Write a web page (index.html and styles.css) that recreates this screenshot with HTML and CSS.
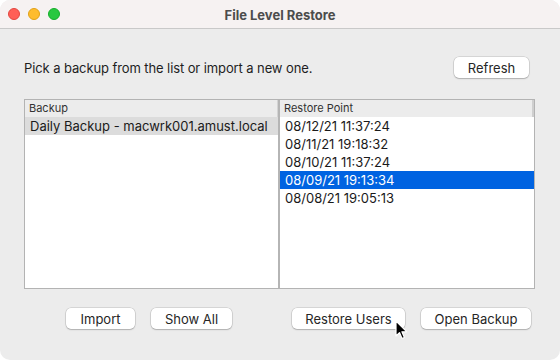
FILE: index.html
```html
<!DOCTYPE html>
<html lang="en">
<head>
<meta charset="UTF-8" />
<title>File Level Restore</title>
<link rel="stylesheet" href="styles.css">
</head>
<body>
<div class="window">
  <div class="titlebar">
    <div class="lights">
      <span class="light red"></span>
      <span class="light yellow"></span>
      <span class="light green"></span>
    </div>
    <div class="title">File Level Restore</div>
  </div>
  <div class="content">
    <div class="top-row">
      <p class="hint">Pick a backup from the list or import a new one.</p>
      <button class="btn refresh-btn">Refresh</button>
    </div>
    <div class="tables">
      <div class="pane backup-pane">
        <div class="pane-header">Backup</div>
        <div class="row selected-grey">Daily Backup - macwrk001.amust.local</div>
      </div>
      <div class="pane points-pane">
        <div class="pane-header">Restore Point</div>
        <div class="row">08/12/21 11:37:24</div>
        <div class="row">08/11/21 19:18:32</div>
        <div class="row">08/10/21 11:37:24</div>
        <div class="row selected-blue">08/09/21 19:13:34</div>
        <div class="row">08/08/21 19:05:13</div>
      </div>
    </div>
    <div class="bottom-row">
      <button class="btn import-btn">Import</button>
      <button class="btn showall-btn">Show All</button>
      <button class="btn restore-btn">Restore Users</button>
      <button class="btn open-btn">Open Backup</button>
    </div>
  </div>
  <!-- mouse pointer over Restore Users -->
  <svg class="cursor" width="14" height="20" viewBox="0 0 14 20">
    <path d="M1 1 L1 16 L4.5 12.6 L7 18.5 L9.4 17.5 L6.9 11.8 L11.8 11.8 Z" fill="#000" stroke="#fff" stroke-width="1.2" stroke-linejoin="round"/>
  </svg>
</div>
</body>
</html>
```

FILE: styles.css
```css
* { box-sizing: border-box; }
body {
  margin: 0;
  background: #fff;
  font-family: 'Inter', 'Liberation Sans', sans-serif;
  color: #1e1e1e;
}
.window {
  position: relative;
  width: 560px;
  height: 360px;
  background: #ececec;
  border-radius: 10px;
  overflow: hidden;
}
.titlebar {
  position: relative;
  height: 29px;
  background: #f6f2f2;
  border-bottom: 1px solid #c9c9c9;
  display: flex;
  align-items: center;
  justify-content: center;
}
.lights {
  position: absolute;
  left: 8px;
  top: 8px;
  display: flex;
  gap: 8px;
}
.light {
  width: 12px;
  height: 12px;
  border-radius: 50%;
}
.red { background: #ff5f57; border: 0.5px solid #e2463f; }
.yellow { background: #febc2e; border: 0.5px solid #e1a116; }
.green { background: #28c840; border: 0.5px solid #14ae2a; }
.title {
  font-size: 13px;
  font-weight: 700;
  color: #4c4c4c;
  margin-top: 1px;
}
.content {
  display: flex;
  flex-direction: column;
  padding: 28px 0 0 24px;
}
.top-row {
  display: flex;
  align-items: center;
  justify-content: space-between;
  padding-right: 31px;
}
.hint {
  margin: 0;
  font-size: 13px;
  letter-spacing: -0.1px;
}
.btn {
  height: 21px;
  padding: 0;
  border: none;
  border-radius: 5px;
  background: #fff;
  font-family: inherit;
  font-size: 13px;
  color: #262626;
  box-shadow: 0 0 0 0.5px rgba(0,0,0,0.18), 0 1px 1.5px rgba(0,0,0,0.18);
}
.refresh-btn { width: 75px; }
.tables {
  display: flex;
  height: 190px;
  margin: 21px 25px 0 0;
  border: 1px solid #b3b3b3;
  background: #fff;
}
.pane {
  display: flex;
  flex-direction: column;
}
.backup-pane {
  width: 255px;
  border-right: 2px solid #b5b5b5;
}
.points-pane {
  flex: 1;
}
.pane-header {
  height: 17px;
  padding-left: 4px;
  font-size: 11px;
  line-height: 17px;
  color: #333;
  background: #ececec;
  border-right: 1px solid #d4d4d4;
}
.points-pane .pane-header {
  border-right: 2px solid #cfcfcf;
}
.row {
  height: 18px;
  padding-left: 5px;
  font-size: 13px;
  line-height: 18px;
  color: #1a1a1a;
  white-space: nowrap;
}
.selected-grey { background: #dcdcdc; }
.selected-blue { background: #0063e1; color: #fff; }
.bottom-row {
  display: flex;
  margin-top: 19px;
  padding-left: 42px;
}
.import-btn { width: 69px; }
.showall-btn { width: 81px; margin-left: 16px; }
.restore-btn { width: 113px; margin-left: 60px; }
.open-btn { width: 110px; margin-left: 16px; }
.cursor {
  position: absolute;
  left: 395px;
  top: 320px;
}
```
